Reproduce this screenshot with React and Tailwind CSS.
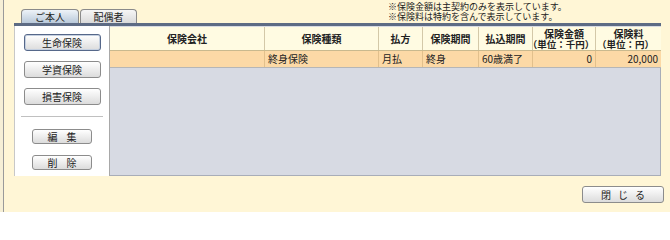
import React from 'react';

const font = { fontFamily: '"Noto Sans CJK JP", "Noto Sans", sans-serif' };

const cols = [
  { label: '保険会社', w: 'w-[155px]' },
  { label: '保険種類', w: 'w-[114px]' },
  { label: '払方', w: 'w-[44px]' },
  { label: '保険期間', w: 'w-[56px]' },
  { label: '払込期間', w: 'w-[54px]' },
  { label: ['保険金額', '（単位：千円）'], w: 'w-[63px]' },
  { label: ['保険料', '（単位：円）'], w: 'w-[65px]' },
];

const row = ['', '終身保険', '月払', '終身', '60歳満了', '0', '20,000'];

function SideButton({ children, active, small }) {
  return (
    <button
      className={
        'flex items-center justify-center rounded-[3px] border bg-gradient-to-b from-[#ffffff] to-[#dcdcdc] text-[10px] leading-[12px] text-[#222] ' +
        (small ? 'h-[15px] w-[60px] tracking-[0.9em] pl-[0.9em] ' : 'h-[17px] w-[77px] ') +
        (active ? 'border-[#56688a] shadow-[inset_0_0_0_1px_#c5d0e0]' : 'border-[#8c8c8c]')
      }
    >
      {children}
    </button>
  );
}

export default function App() {
  return (
    <div className="flex h-[212px] w-[670px] overflow-hidden bg-[#fff6d6]" style={font}>
      <div className="w-[3px] bg-[#f6efd6]" />
      <div className="w-[1px] bg-[#9a9a9a]" />
      <div className="flex flex-1 flex-col">
        {/* top row: tabs + notes */}
        <div className="flex h-[23px] items-end">
          <div className="ml-[17px] flex">
            <div className="flex h-[14px] w-[58px] items-center justify-center rounded-t-[4px] border border-b-0 border-[#8a8a8a] bg-gradient-to-b from-[#eef3f8] to-[#b9c9da] text-[10px] leading-[12px] text-[#222]">
              ご本人
            </div>
            <div className="ml-[1px] flex h-[14px] w-[57px] items-center justify-center rounded-t-[4px] border border-b-0 border-[#8a8a8a] bg-gradient-to-b from-[#f6f6f6] to-[#dadada] text-[10px] leading-[12px] text-[#222]">
              配偶者
            </div>
          </div>
          <div className="ml-[251px] self-start pt-[2px] text-[9px] leading-[9px] text-[#222]">
            <div className="h-[9.5px]">※保険金額は主契約のみを表示しています。</div>
            <div className="h-[9.5px]">※保険料は特約を含んで表示しています。</div>
          </div>
        </div>

        {/* panel */}
        <div className="ml-[10px] flex h-[153px] w-[647px] flex-col border-t-[3px] border-[#5d6b84] bg-white">
          <div className="flex flex-1 border-l border-[#c8c8c8]">
            {/* left column */}
            <div className="flex w-[94px] flex-col items-center pt-[8px]">
              <SideButton active>生命保険</SideButton>
              <div className="mt-[10px]">
                <SideButton>学資保険</SideButton>
              </div>
              <div className="mt-[10px]">
                <SideButton>損害保険</SideButton>
              </div>
              <div className="mt-[11px] h-[1px] w-[82px] bg-[#c0c0c0]" />
              <div className="mt-[12px]">
                <SideButton small>編集</SideButton>
              </div>
              <div className="mt-[11px]">
                <SideButton small>削除</SideButton>
              </div>
            </div>

            {/* grid */}
            <div className="flex flex-1 flex-col border-l border-[#a8a8a8] bg-[#d7dae3]">
              <div className="mt-[1px] flex h-[24px] border-b border-[#c9b98e] bg-[#fffbe2]">
                {cols.map((c, i) => (
                  <div
                    key={i}
                    className={
                      c.w +
                      ' flex flex-col items-center justify-center text-[10px] font-bold leading-[11px] text-[#222] ' +
                      (i < cols.length - 1 ? 'border-r border-[#d3c8a8]' : '')
                    }
                  >
                    {Array.isArray(c.label) ? (
                      <>
                        <span className="h-[11px]">{c.label[0]}</span>
                        <span className="-ml-[6px] h-[11px] text-[9.5px]">{c.label[1]}</span>
                      </>
                    ) : (
                      c.label
                    )}
                  </div>
                ))}
              </div>
              <div className="flex h-[17px] border-b border-[#b6b6b6] bg-[#fcd9a6]">
                {cols.map((c, i) => (
                  <div
                    key={i}
                    className={
                      c.w +
                      ' flex items-center px-[3px] text-[10px] leading-[12px] text-[#222] ' +
                      (i >= 5 ? 'justify-end ' : '') +
                      (i < cols.length - 1 ? 'border-r border-[#e2c08c]' : '')
                    }
                  >
                    {row[i]}
                  </div>
                ))}
              </div>
              <div className="flex-1 border-b border-r border-[#a8adb8]" />
            </div>
          </div>
        </div>

        {/* bottom */}
        <div className="flex flex-1 items-start justify-end pr-[6px] pt-[10px]">
          <button className="flex h-[17px] w-[82px] items-center justify-center rounded-[3px] border border-[#8c8c8c] bg-gradient-to-b from-[#ffffff] to-[#dcdcdc] pl-[0.7em] text-[10px] leading-[12px] tracking-[0.7em] text-[#222]">
            閉じる
          </button>
        </div>
      </div>
    </div>
  );
}
